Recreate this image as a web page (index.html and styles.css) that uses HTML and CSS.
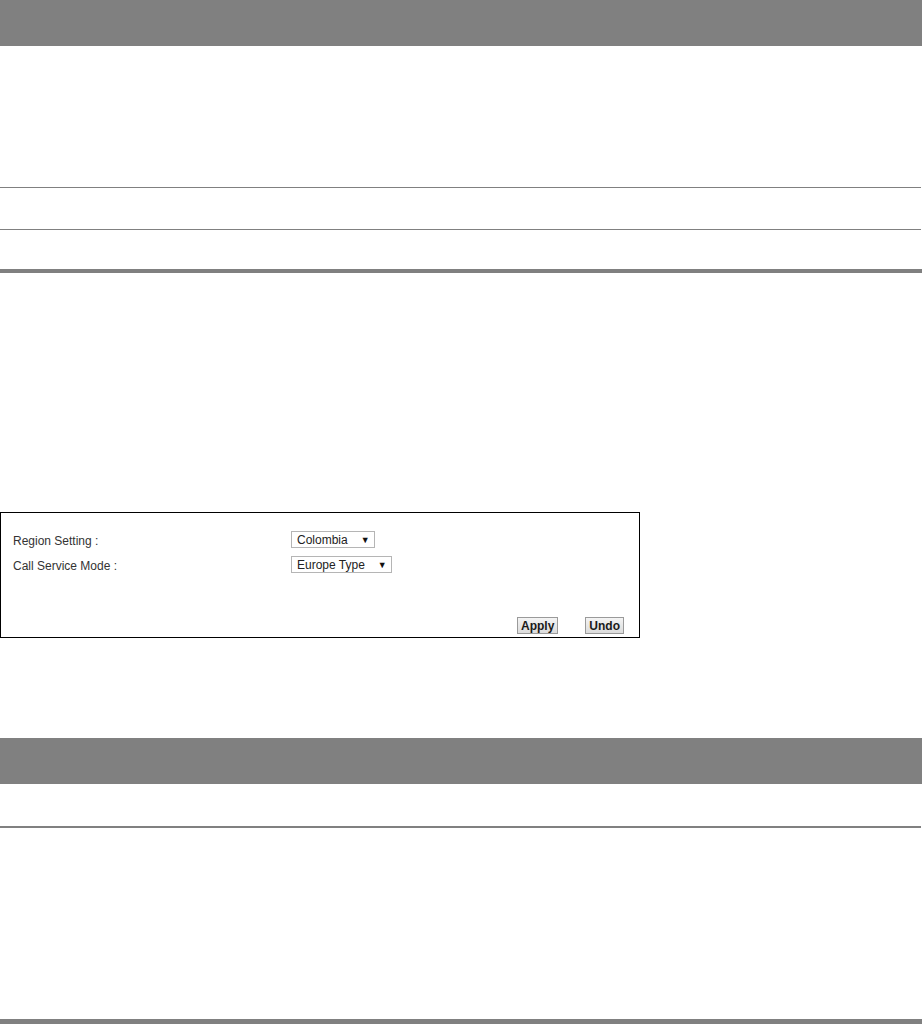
FILE: index.html
```html
<!DOCTYPE html>
<html lang="en">
<head>
  <meta charset="UTF-8">
  <meta name="viewport" content="width=device-width, initial-scale=1.0">
  <title>Region Setting</title>
  <link rel="stylesheet" href="styles.css">
</head>
<body>
  <div class="section-bar"></div>
  <div class="intro-space"></div>
  <div class="table-row"></div>
  <div class="table-row last"></div>
  <div class="thick-rule"></div>

  <div class="gap-before-box"></div>

  <div class="setting-box">
    <div class="form-grid">
      <div class="field-label">Region Setting :</div>
      <div class="field-value">
        <div class="fake-select"><span>Colombia</span><span class="arrow">&#9660;</span></div>
      </div>
      <div class="field-label">Call Service Mode :</div>
      <div class="field-value">
        <div class="fake-select"><span>Europe Type</span><span class="arrow">&#9660;</span></div>
      </div>
    </div>
    <div class="button-row">
      <button class="form-button">Apply</button>
      <button class="form-button">Undo</button>
    </div>
  </div>

  <div class="gap-after-box"></div>

  <div class="section-bar"></div>
  <div class="table-row second"></div>
  <div class="bottom-space"></div>
  <div class="thick-rule bottom"></div>
</body>
</html>
```

FILE: styles.css
```css
body {
  font-family: "Liberation Sans", Arial, sans-serif;
  margin: 0;
  padding: 0;
  background-color: #ffffff;
  color: #333333;
  overflow: hidden;
}
.section-bar {
  height: 46px;
  background-color: #808080;
}
.intro-space {
  height: 141px;
}
.table-row {
  height: 41px;
  border-top: 1px solid #808080;
  margin-right: 1px;
}
.table-row.last {
  height: 39px;
}
.table-row.second {
  height: 42px;
  border-top: none;
  border-bottom: 2px solid #808080;
}
.thick-rule {
  height: 4px;
  background-color: #808080;
}
.thick-rule.bottom {
  height: 5px;
}
.gap-before-box {
  height: 239px;
}
.setting-box {
  width: 640px;
  height: 126px;
  box-sizing: border-box;
  border: 1.5px solid #000000;
  padding: 18px 15px 0 12px;
  display: flex;
  flex-direction: column;
}
.form-grid {
  display: grid;
  grid-template-columns: 278px auto;
  row-gap: 8px;
}
.field-label {
  font-size: 12px;
  color: #333333;
  padding-top: 4px;
  line-height: 13px;
}
.field-value {
  display: flex;
}
.fake-select {
  display: inline-flex;
  align-items: center;
  gap: 13px;
  height: 17px;
  box-sizing: border-box;
  padding: 0 4px 0 5px;
  border: 1px solid #b5b5b5;
  background-color: #ffffff;
  font-size: 12px;
  color: #222222;
}
.fake-select .arrow {
  font-size: 9px;
  color: #111111;
}
.button-row {
  display: flex;
  justify-content: flex-end;
  gap: 27px;
  margin-top: auto;
  margin-bottom: 3px;
}
.form-button {
  font-family: "Liberation Sans", Arial, sans-serif;
  font-weight: bold;
  font-size: 12px;
  color: #1a1a1a;
  height: 17px;
  padding: 0 3px;
  border: 1px solid #9a9a9a;
  background: linear-gradient(#f4f4f4, #dcdcdc);
  cursor: pointer;
}
.gap-after-box {
  height: 100px;
}
.bottom-space {
  height: 191px;
}
```
